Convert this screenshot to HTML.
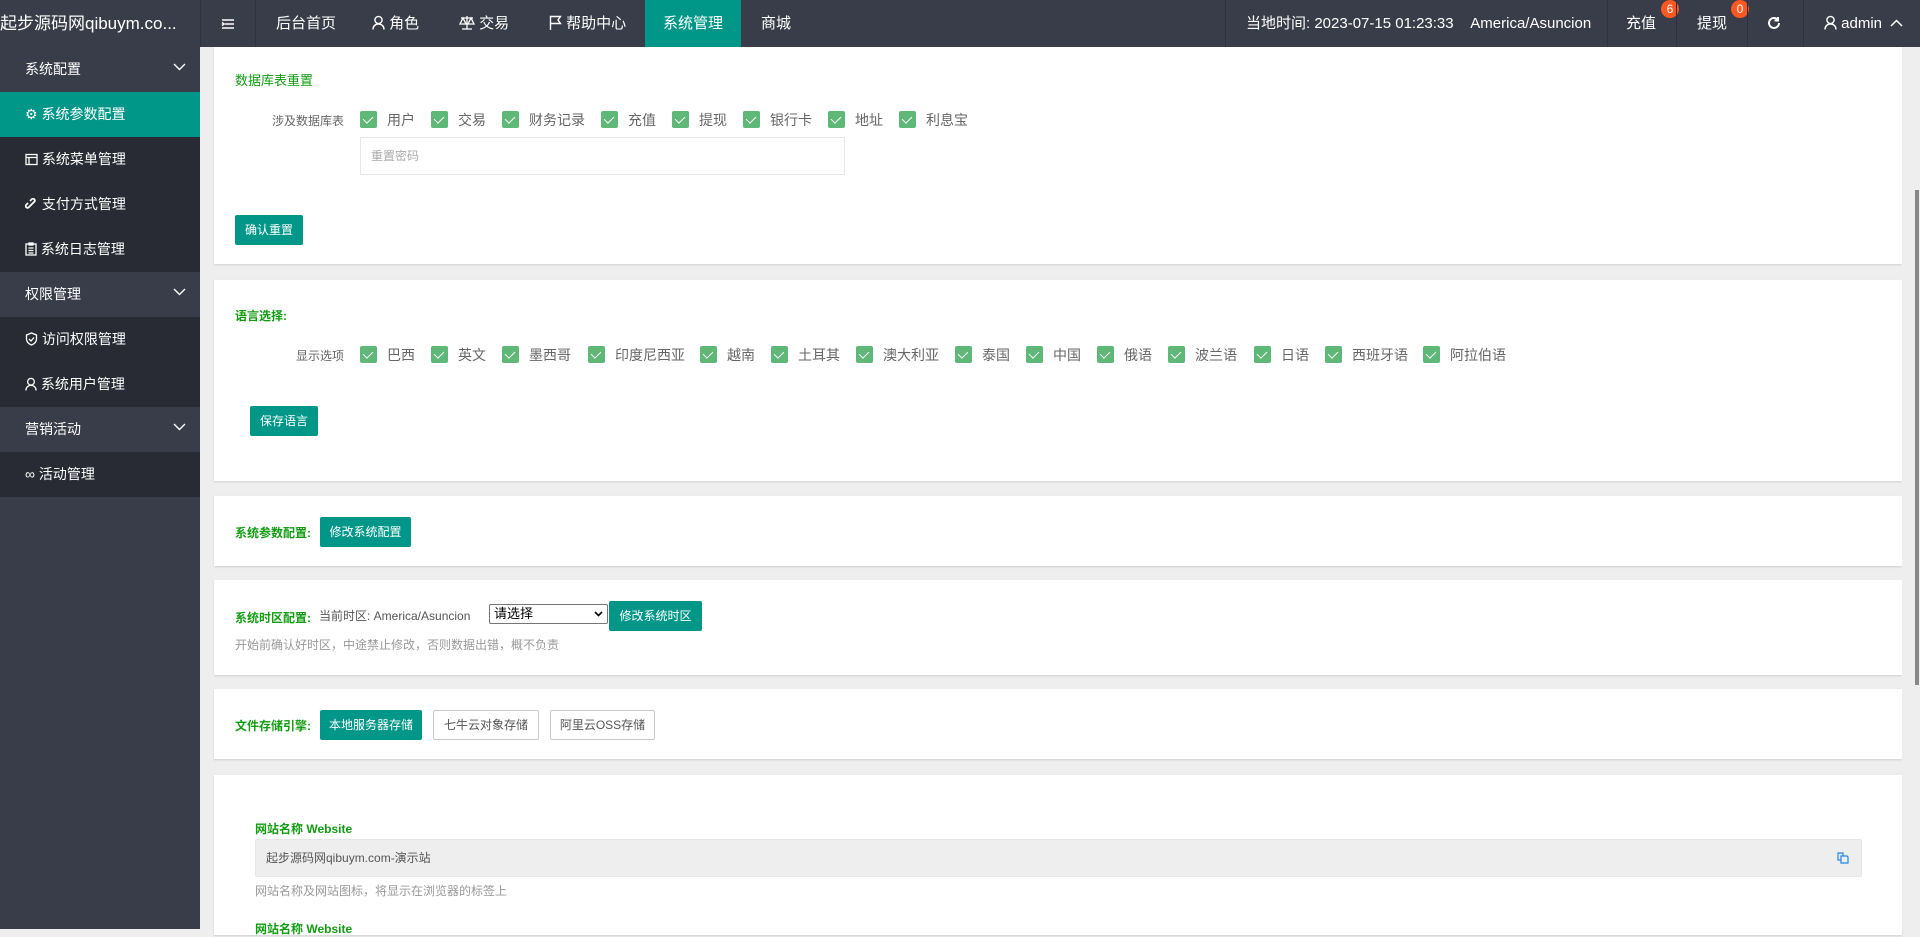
<!DOCTYPE html>
<html><head><meta charset="utf-8"><style>
*{margin:0;padding:0;box-sizing:border-box}
body{width:1920px;height:929px;overflow:hidden;background:#eee;font-family:"Liberation Sans","Noto Sans CJK SC",sans-serif;font-size:14px;color:#666;position:relative}
.a{position:absolute;white-space:nowrap}
#hd{position:absolute;left:0;top:0;width:1920px;height:47px;background:#393d49}
#hd .t{position:absolute;top:0;height:47px;line-height:47px;color:#fff;font-size:15px;white-space:nowrap}
.sep{position:absolute;top:0;width:1px;height:47px;background:#2f323c}
#sb{position:absolute;left:0;top:47px;width:200px;height:882px;background:#393d49}
.mi{position:absolute;left:0;width:200px;height:45px;line-height:45px;color:#fff;font-size:14px;padding-left:25px}
.grp{background:#393d49;padding-left:25px}
.sub{background:#282b33;padding-left:25px}
.act{background:#009688}
.chev{position:absolute;right:14px;top:16px}
.card{position:absolute;left:214px;width:1688px;background:#fff;box-shadow:0 1px 2px rgba(0,0,0,.12)}
.g{color:#119c11;font-size:13px}
.gb{color:#119c11;font-size:12px;font-weight:bold}
.btn{position:absolute;background:#009688;color:#fff;font-size:12px;text-align:center;border-radius:2px}
.btn2{position:absolute;background:#fff;color:#555;border:1px solid #c9c9c9;font-size:12px;text-align:center;border-radius:2px}
.cb{position:absolute;height:18px;line-height:18px;font-size:14px;color:#666;white-space:nowrap}
.cb i{display:inline-block;width:17px;height:17px;background:#5fb878;border-radius:2px;vertical-align:top;margin-right:10px;position:relative}
.cb i:after{content:"";position:absolute;left:5px;top:3px;width:5px;height:8px;border-right:1.5px solid #fff;border-bottom:1.5px solid #fff;transform:rotate(45deg)}
.badge{position:absolute;top:0;width:18px;height:18px;border-radius:50%;background:#ff5722;color:#fff;font-size:12px;text-align:center;line-height:18px}
svg{vertical-align:-2px}
</style></head><body>
<div id="hd">
<div class="t" style="left:0;font-size:17px;width:200px;overflow:hidden">起步源码网qibuym.co...</div>
<div class="sep" style="left:200px"></div>
<div class="t" style="left:221px"><svg width="14" height="12" viewBox="0 0 14 12" fill="none" stroke="#fff" stroke-width="1.6"><path d="M1 2h12M4 6h9M1 10h12M1 4.5l2 1.5-2 1.5"/></svg></div>
<div class="sep" style="left:255px"></div>
<div class="t" style="left:276px">后台首页</div>
<div class="t" style="left:372px"><svg width="13" height="15" viewBox="0 0 13 15" fill="none" stroke="#fff" stroke-width="1.4"><circle cx="6.5" cy="5" r="3.6"/><path d="M1 14.5c0-3.5 2.5-5.5 5.5-5.5s5.5 2 5.5 5.5"/></svg> 角色</div>
<div class="t" style="left:459px"><svg width="16" height="15" viewBox="0 0 16 15" fill="none" stroke="#fff" stroke-width="1.3"><path d="M8 1v13M3 14h10M2 3h12M4 3l-3 6h6zM12 3l-3 6h6z"/></svg> 交易</div>
<div class="t" style="left:549px"><svg width="13" height="15" viewBox="0 0 13 15" fill="none" stroke="#fff" stroke-width="1.4"><path d="M1.5 15V1.5h10l-2.5 3.5 2.5 3.5h-10"/></svg> 帮助中心</div>
<div class="t" style="left:645px;width:96px;background:#009688;text-align:center">系统管理</div>
<div class="t" style="left:761px">商城</div>
<div class="sep" style="left:1225px"></div>
<div class="t" style="left:1246px">当地时间: 2023-07-15 01:23:33 &nbsp;&nbsp; America/Asuncion</div>
<div class="sep" style="left:1607px"></div>
<div class="t" style="left:1626px">充值</div>
<div class="badge" style="left:1661px">6</div>
<div class="sep" style="left:1676px"></div>
<div class="t" style="left:1697px">提现</div>
<div class="badge" style="left:1731px">0</div>
<div class="sep" style="left:1747px"></div>
<div class="t" style="left:1767px"><svg width="14" height="14" viewBox="0 0 14 14" fill="none" stroke="#fff" stroke-width="2"><path d="M12 7a5 5 0 1 1-1.5-3.6"/><path d="M11 1v3.5H7.5" /></svg></div>
<div class="sep" style="left:1803px"></div>
<div class="t" style="left:1824px"><svg width="13" height="15" viewBox="0 0 13 15" fill="none" stroke="#fff" stroke-width="1.4"><circle cx="6.5" cy="5" r="3.6"/><path d="M1 14.5c0-3.5 2.5-5.5 5.5-5.5s5.5 2 5.5 5.5"/></svg> admin <svg width="13" height="8" viewBox="0 0 13 8" fill="none" stroke="#fff" stroke-width="1.5" style="margin-left:4px;vertical-align:1px"><path d="M1 7l5.5-5.5L12 7"/></svg></div>
</div>
<div id="sb">
<div class="mi grp" style="top:0">系统配置<svg class="chev" width="13" height="8" viewBox="0 0 13 8" fill="none" stroke="#fff" stroke-width="1.4"><path d="M1 1l5.5 5.5L12 1"/></svg></div>
<div class="mi act" style="top:45px">&#9881; 系统参数配置</div>
<div class="mi sub" style="top:90px"><svg width="13" height="13" viewBox="0 0 13 13" fill="none" stroke="#fff" stroke-width="1.3"><rect x="1" y="1.5" width="11" height="10"/><path d="M1 4.5h11M4 4.5v7"/></svg> 系统菜单管理</div>
<div class="mi sub" style="top:135px"><svg width="13" height="13" viewBox="0 0 13 13" fill="none" stroke="#fff" stroke-width="1.8"><path d="M5.5 7.5l-2 2a1.8 1.8 0 0 1-2.5-2.5l2-2M7.5 5.5l2-2A1.8 1.8 0 0 0 7 1L5 3M4.5 8.5l4-4"/></svg> 支付方式管理</div>
<div class="mi sub" style="top:180px"><svg width="12" height="14" viewBox="0 0 12 14" fill="none" stroke="#fff" stroke-width="1.3"><rect x="1" y="2" width="10" height="11"/><path d="M4 1h4v2H4zM3.5 6h5M3.5 8.5h5M3.5 11h5"/></svg> 系统日志管理</div>
<div class="mi grp" style="top:225px">权限管理<svg class="chev" width="13" height="8" viewBox="0 0 13 8" fill="none" stroke="#fff" stroke-width="1.4"><path d="M1 1l5.5 5.5L12 1"/></svg></div>
<div class="mi sub" style="top:270px"><svg width="13" height="14" viewBox="0 0 13 14" fill="none" stroke="#fff" stroke-width="1.3"><path d="M6.5 1L1.5 3v4c0 3 2.5 5 5 6 2.5-1 5-3 5-6V3z"/><path d="M4 7l2 2 3-3.5"/></svg> 访问权限管理</div>
<div class="mi sub" style="top:315px"><svg width="12" height="14" viewBox="0 0 13 15" fill="none" stroke="#fff" stroke-width="1.4"><circle cx="6.5" cy="5" r="3.6"/><path d="M1 14.5c0-3.5 2.5-5.5 5.5-5.5s5.5 2 5.5 5.5"/></svg> 系统用户管理</div>
<div class="mi grp" style="top:360px">营销活动<svg class="chev" width="13" height="8" viewBox="0 0 13 8" fill="none" stroke="#fff" stroke-width="1.4"><path d="M1 1l5.5 5.5L12 1"/></svg></div>
<div class="mi sub" style="top:405px">&#8734; 活动管理</div>
</div>

<div class="card" style="top:47px;height:217px"></div>
<div class="a g" style="left:235px;top:70px">数据库表重置</div>
<div class="a" style="left:272px;top:112px;font-size:12px">涉及数据库表</div>
<div class="cb" style="left:360px;top:111px"><i></i>用户</div>
<div class="cb" style="left:431px;top:111px"><i></i>交易</div>
<div class="cb" style="left:502px;top:111px"><i></i>财务记录</div>
<div class="cb" style="left:601px;top:111px"><i></i>充值</div>
<div class="cb" style="left:672px;top:111px"><i></i>提现</div>
<div class="cb" style="left:743px;top:111px"><i></i>银行卡</div>
<div class="cb" style="left:828px;top:111px"><i></i>地址</div>
<div class="cb" style="left:899px;top:111px"><i></i>利息宝</div>
<div class="a" style="left:360px;top:137px;width:485px;height:38px;border:1px solid #e6e6e6;font-size:12px;color:#aaa;line-height:36px;padding-left:10px">重置密码</div>
<div class="btn" style="left:235px;top:215px;width:68px;height:30px;line-height:30px">确认重置</div>

<div class="card" style="top:280px;height:201px"></div>
<div class="a gb" style="left:235px;top:307px">语言选择:</div>
<div class="a" style="left:296px;top:347px;font-size:12px">显示选项</div>
<div class="cb" style="left:360px;top:346px"><i></i>巴西</div>
<div class="cb" style="left:431px;top:346px"><i></i>英文</div>
<div class="cb" style="left:502px;top:346px"><i></i>墨西哥</div>
<div class="cb" style="left:588px;top:346px"><i></i>印度尼西亚</div>
<div class="cb" style="left:700px;top:346px"><i></i>越南</div>
<div class="cb" style="left:771px;top:346px"><i></i>土耳其</div>
<div class="cb" style="left:856px;top:346px"><i></i>澳大利亚</div>
<div class="cb" style="left:955px;top:346px"><i></i>泰国</div>
<div class="cb" style="left:1026px;top:346px"><i></i>中国</div>
<div class="cb" style="left:1097px;top:346px"><i></i>俄语</div>
<div class="cb" style="left:1168px;top:346px"><i></i>波兰语</div>
<div class="cb" style="left:1254px;top:346px"><i></i>日语</div>
<div class="cb" style="left:1325px;top:346px"><i></i>西班牙语</div>
<div class="cb" style="left:1423px;top:346px"><i></i>阿拉伯语</div>
<div class="btn" style="left:250px;top:406px;width:68px;height:30px;line-height:30px">保存语言</div>

<div class="card" style="top:496px;height:70px"></div>
<div class="a gb" style="left:235px;top:524px">系统参数配置:</div>
<div class="btn" style="left:320px;top:517px;width:91px;height:30px;line-height:30px">修改系统配置</div>

<div class="card" style="top:580px;height:95px"></div>
<div class="a gb" style="left:235px;top:609px">系统时区配置:</div>
<div class="a" style="left:319px;top:607px;font-size:12px;color:#555">当前时区: America/Asuncion</div>
<div class="a" style="left:489px;top:604px;width:119px;height:20px;border:1px solid #767676;border-radius:2px;background:#fff;font-size:13px;color:#000;line-height:18px;padding-left:4px">请选择<svg class="a" style="right:4px;top:6px" width="9" height="6" viewBox="0 0 9 6" fill="none" stroke="#000" stroke-width="1.6"><path d="M1 1l3.5 3.5L8 1"/></svg></div>
<div class="btn" style="left:609px;top:601px;width:93px;height:30px;line-height:30px">修改系统时区</div>
<div class="a" style="left:235px;top:636px;font-size:12px;color:#999">开始前确认好时区，中途禁止修改，否则数据出错，概不负责</div>

<div class="card" style="top:689px;height:70px"></div>
<div class="a gb" style="left:235px;top:717px">文件存储引擎:</div>
<div class="btn" style="left:320px;top:710px;width:102px;height:30px;line-height:30px">本地服务器存储</div>
<div class="btn2" style="left:433px;top:710px;width:106px;height:30px;line-height:28px">七牛云对象存储</div>
<div class="btn2" style="left:550px;top:710px;width:105px;height:30px;line-height:28px">阿里云OSS存储</div>

<div class="card" style="top:775px;height:160px"></div>
<div class="a gb" style="left:255px;top:820px">网站名称 Website</div>
<div class="a" style="left:255px;top:839px;width:1607px;height:38px;background:#eee;border:1px solid #e6e6e6;border-radius:2px;font-size:12px;color:#555;line-height:36px;padding-left:10px">起步源码网qibuym.com-演示站<svg class="a" style="right:12px;top:12px" width="12" height="12" viewBox="0 0 12 12" fill="none" stroke="#1e88e5" stroke-width="1.2"><path d="M1 1h5v3H4v4H1zM4 4h6l1 1v6H4z"/></svg></div>
<div class="a" style="left:255px;top:882px;font-size:12px;color:#999">网站名称及网站图标，将显示在浏览器的标签上</div>
<div class="a gb" style="left:255px;top:920px">网站名称 Website</div>

<div class="a" style="left:1902px;top:47px;width:18px;height:882px;background:#eee"></div>
<div class="a" style="left:1915px;top:190px;width:4px;height:495px;background:#888"></div>
</body></html>
